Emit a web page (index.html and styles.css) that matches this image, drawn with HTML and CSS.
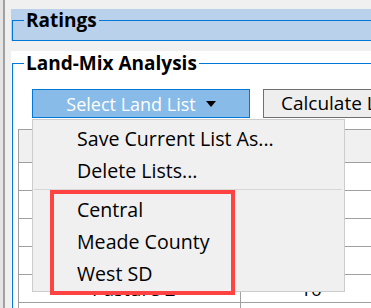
FILE: index.html
```html
<!DOCTYPE html>
<html>
<head>
  <title>Land-Mix Analysis</title>
  <meta name="viewport" content="width=device-width, initial-scale=1">
  <link rel="stylesheet" href="styles.css">
</head>
<body>

  <div class="window">
    <div class="edge"></div>

    <div class="main">
      <!-- Ratings header -->
      <div class="ratings">
        <fieldset class="group">
          <legend>Ratings</legend>
          <div class="group-body"></div>
        </fieldset>
      </div>

      <!-- Land-Mix Analysis -->
      <div class="analysis">
        <fieldset class="group">
          <legend>Land-Mix Analysis</legend>

          <div class="toolbar">
            <div class="dropdown">
              <button class="btn btn-primary">Select Land List <span class="caret"></span></button>

              <div class="menu">
                <div class="menu-item">Save Current List As...</div>
                <div class="menu-item">Delete Lists...</div>
                <div class="menu-sep"></div>
                <div class="menu-item">Central</div>
                <div class="menu-item">Meade County</div>
                <div class="menu-item">West SD</div>
                <div class="highlight"></div>
              </div>
            </div>
            <button class="btn">Calculate Land Mix</button>
          </div>

          <table class="grid">
            <tr><th>Land Type</th><th>Percent</th></tr>
            <tr><td>Cropland 1</td><td>40</td></tr>
            <tr><td>Cropland 2</td><td>20</td></tr>
            <tr><td>Hayland</td><td>10</td></tr>
            <tr><td>Pasture 1</td><td>20</td></tr>
            <tr><td>Pasture 2</td><td>10</td></tr>
            <tr><td></td><td></td></tr>
          </table>
        </fieldset>
      </div>
    </div>
  </div>

</body>
</html>
```

FILE: styles.css
```css
body {
  font-family: 'Open Sans', 'Noto Sans', sans-serif;
  margin: 0;
  background-color: #f0f0f0;
  color: #000;
  overflow: hidden;
}

.window {
  display: flex;
  height: 308px;
}

.edge {
  width: 2px;
  border-left: 3px solid #e4e4e4;
  background-color: #a0a0a0;
  margin-right: 6px;
}

.main {
  flex: 1;
  min-width: 0;
  padding-top: 9px;
  overflow: hidden;
}

.ratings {
  background-color: #b9d1ea;
  height: 32px;
  padding-left: 1px;
}

.group {
  margin: 0;
  padding: 0;
  min-width: 0;
  border: 1px solid #0078d7;
  border-right: none;
}

.group legend {
  margin-left: 11px;
  padding: 0 2px;
  font-weight: bold;
  font-size: 19px;
  line-height: 22px;
}

.group-body {
  height: 9px;
}

.analysis {
  background-color: #fff;
  margin-top: 10px;
  padding-left: 1px;
  height: 260px;
}

.analysis .group {
  border-bottom: none;
  height: 300px;
}

.analysis .group legend {
  line-height: 24px;
}

.toolbar {
  display: flex;
  gap: 13px;
  margin: 14px 0 0 19px;
}

.dropdown {
  position: relative;
}

.btn {
  font-family: inherit;
  font-size: 19px;
  height: 29px;
  padding: 0 17px;
  border: 1px solid #707070;
  background-color: #eeeeee;
  color: #000;
  white-space: nowrap;
  flex-shrink: 0;
  line-height: 1;
}

.btn-primary {
  width: 218px;
  display: flex;
  align-items: center;
  justify-content: center;
  gap: 10px;
  font-size: 18px;
  background-color: #88bbe8;
  border-color: #0078d7;
  color: #fff;
}

.caret {
  width: 0;
  height: 0;
  border-left: 5.5px solid transparent;
  border-right: 5.5px solid transparent;
  border-top: 6px solid #000;
}

.menu {
  position: absolute;
  top: 30px;
  left: 0;
  width: 313px;
  height: 173px;
  box-sizing: border-box;
  padding: 3px 0 0;
  background-color: #f0f0f0;
  border: 1px solid #cccccc;
  font-size: 19.6px;
  z-index: 2;
}

.menu-item {
  line-height: 32px;
  padding-left: 44px;
  white-space: nowrap;
}

.menu-sep {
  height: 1px;
  margin: 2px 2px 4px 1px;
  background-color: #d7d7d7;
}

.highlight {
  position: absolute;
  left: 17px;
  top: 70px;
  width: 185px;
  height: 105px;
  box-sizing: border-box;
  border: 4px solid #ff4343;
}

.grid {
  margin: 11px 0 0 5px;
  border-collapse: collapse;
  width: 364px;
  font-size: 19px;
}

.grid th, .grid td {
  border: 1px solid #a0a0a0;
  padding: 0;
  font-weight: normal;
  white-space: nowrap;
}

.grid th {
  height: 32px;
  background-color: #f0f0f0;
}

.grid td {
  height: 27px;
}

.grid td:first-child {
  width: 222px;
  padding-left: 73px;
  box-sizing: border-box;
}

.grid td:last-child {
  text-align: center;
}
```
